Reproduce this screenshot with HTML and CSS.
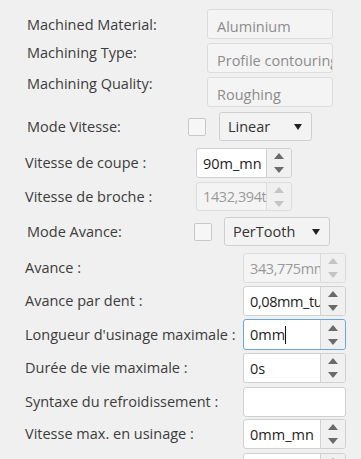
FILE: index.html
```html
<!DOCTYPE html>
<html>
<head>
<meta charset="utf-8">
<link rel="stylesheet" href="styles.css">
</head>
<body>
<div class="form">
  <div class="row top r1">
    <div class="label lt1">Machined Material:</div>
    <div class="field ro"><span class="txt">Aluminium</span></div>
  </div>
  <div class="row top r2">
    <div class="label lt2">Machining Type:</div>
    <div class="field ro"><span class="txt">Profile contouring</span></div>
  </div>
  <div class="row top r3">
    <div class="label lt3">Machining Quality:</div>
    <div class="field ro"><span class="txt">Roughing</span></div>
  </div>

  <div class="row mode1 r4">
    <div class="label">Mode Vitesse:</div>
    <div class="check"></div>
    <div class="combo c1"><span class="txt">Linear</span><span class="arrow"></span></div>
  </div>

  <div class="row mid r5">
    <div class="label">Vitesse de coupe :</div>
    <div class="spin"><span class="txt">90m_mn</span><span class="btns"><i class="up"></i><i class="down"></i></span></div>
  </div>
  <div class="row mid r6">
    <div class="label">Vitesse de broche :</div>
    <div class="spin dis"><span class="txt num">1432,394tr_mn</span><span class="btns"><i class="up"></i><i class="down"></i></span></div>
  </div>

  <div class="row mode2 r7">
    <div class="label">Mode Avance:</div>
    <div class="check"></div>
    <div class="combo c2"><span class="txt">PerTooth</span><span class="arrow"></span></div>
  </div>

  <div class="row low r8">
    <div class="label">Avance :</div>
    <div class="spin dis"><span class="txt num">343,775mm_mn</span><span class="btns"><i class="up"></i><i class="down"></i></span></div>
  </div>
  <div class="row low r9">
    <div class="label">Avance par dent :</div>
    <div class="spin"><span class="txt num">0,08mm_tu</span><span class="btns"><i class="up"></i><i class="down"></i></span></div>
  </div>
  <div class="row low r10">
    <div class="label">Longueur d'usinage maximale :</div>
    <div class="spin focus"><span class="txt">0mm<span class="caret"></span></span><span class="btns"><i class="up"></i><i class="down"></i></span></div>
  </div>
  <div class="row low r11">
    <div class="label">Durée de vie maximale :</div>
    <div class="spin"><span class="txt">0s</span><span class="btns"><i class="up"></i><i class="down"></i></span></div>
  </div>
  <div class="row low r12">
    <div class="label">Syntaxe du refroidissement :</div>
    <div class="edit"></div>
  </div>
  <div class="row low r13">
    <div class="label">Vitesse max. en usinage :</div>
    <div class="spin"><span class="txt">0mm_mn</span><span class="btns"><i class="up"></i><i class="down"></i></span></div>
  </div>
  <div class="row low r14">
    <div class="label"></div>
    <div class="spin"><span class="txt"></span><span class="btns"><i class="up"></i><i class="down"></i></span></div>
  </div>
</div>
</body>
</html>
```

FILE: styles.css
```css
html, body {
  margin: 0;
  padding: 0;
  background: #f0f0f0;
  overflow: hidden;
}
body {
  width: 361px;
  height: 459px;
  font-family: "Open Sans", "Noto Sans", sans-serif;
  font-size: 14.5px;
  color: #3c3c3c;
}
.form {
  display: flex;
  flex-direction: column;
  padding-top: 9px;
}
.row {
  display: flex;
  align-items: center;
  height: 30px;
  box-sizing: border-box;
  flex: 0 0 auto;
}
.label {
  line-height: 18px;
  white-space: nowrap;
  box-sizing: border-box;
}

/* vertical spacing */
.r2, .r3 { margin-top: 4px; }
.r4 { margin-top: 5px; height: 29px; }
.r5 { margin-top: 7px; }
.r6 { margin-top: 4px; height: 29px; }
.r7 { margin-top: 6px; height: 29px; }
.r8 { margin-top: 7px; }
.r9 { margin-top: 3px; }
.r10 { margin-top: 3px; height: 31px; }
.r11 { margin-top: 3px; }
.r12 { margin-top: 4px; }
.r13 { margin-top: 2px; }
.r14 { margin-top: 4px; }

/* top read-only section */
.top { align-items: flex-start; }
.top .label { flex: 0 0 207px; padding-left: 27px; }
.lt1 { margin-top: 7px; }
.lt2 { margin-top: 1px; }
.lt3 { margin-top: -2px; }
.field {
  width: 126px;
  height: 30px;
  box-sizing: border-box;
  border: 1px solid #dcdcdc;
  border-radius: 3px;
  background: #f4f4f4;
  color: #8c8c8c;
  padding: 0 0 0 9px;
  display: flex;
  align-items: center;
  overflow: hidden;
  white-space: nowrap;
}
.field .txt { padding-top: 5px; }

/* mode rows */
.mode1 .label { flex: 0 0 188px; padding-left: 27px; }
.mode2 .label { flex: 0 0 194px; padding-left: 27px; }
.check {
  width: 18px;
  height: 18px;
  box-sizing: border-box;
  border: 1px solid #c8c8c8;
  border-radius: 2px;
  background: #f6f6f6;
  flex: 0 0 auto;
}
.mode1 .check { margin-right: 13px; }
.mode2 .check { margin-right: 12px; }
.combo {
  height: 29px;
  box-sizing: border-box;
  border: 1px solid #cfcfcf;
  border-radius: 3px;
  background: #f3f3f3;
  color: #333;
  display: flex;
  align-items: center;
  justify-content: space-between;
  padding: 0 9px 0 8px;
}
.c1 { width: 93px; }
.c2 { width: 106px; }
.arrow {
  width: 0;
  height: 0;
  border-left: 4.5px solid transparent;
  border-right: 4.5px solid transparent;
  border-top: 6px solid #222;
}

/* spin boxes */
.mid .label { flex: 0 0 196px; padding-left: 25px; }
.mid .spin { width: 96px; }
.low .label { flex: 0 0 243px; padding-left: 25px; }
.low .spin, .low .edit { width: 103px; }
.spin, .edit {
  height: 100%;
  box-sizing: border-box;
  border: 1px solid #d0d0d0;
  border-radius: 3px;
  background: #ffffff;
  color: #1e1e1e;
  display: flex;
  align-items: stretch;
}
.spin .txt {
  flex: 1 1 auto;
  min-width: 0;
  overflow: hidden;
  white-space: nowrap;
  padding-left: 6px;
  display: flex;
  align-items: center;
  border-radius: 3px 0 0 3px;
}
.spin .txt.num { letter-spacing: -0.4px; }
.btns {
  flex: 0 0 24px;
  border-left: 1px solid #d0d0d0;
  background: #f0f0f0;
  border-radius: 0 3px 3px 0;
  display: flex;
  flex-direction: column;
  align-items: center;
  justify-content: center;
  gap: 8px;
}
.btns i {
  width: 0;
  height: 0;
  border-left: 5px solid transparent;
  border-right: 5px solid transparent;
}
.btns .up { border-bottom: 6px solid #6a6a6a; }
.btns .down { border-top: 6px solid #6a6a6a; }
.spin.dis { background: #f4f4f4; border-color: #dcdcdc; }
.spin.dis .txt { color: #9a9a9a; }
.spin.dis .btns { border-left-color: #dcdcdc; }
.spin.dis .btns .up { border-bottom-color: #c4c4c4; }
.spin.dis .btns .down { border-top-color: #c4c4c4; }
.spin.focus { border-color: #6aa6d6; }
.caret {
  display: inline-block;
  width: 1px;
  height: 18px;
  background: #111;
}
.edit { background: #fff; }
```
